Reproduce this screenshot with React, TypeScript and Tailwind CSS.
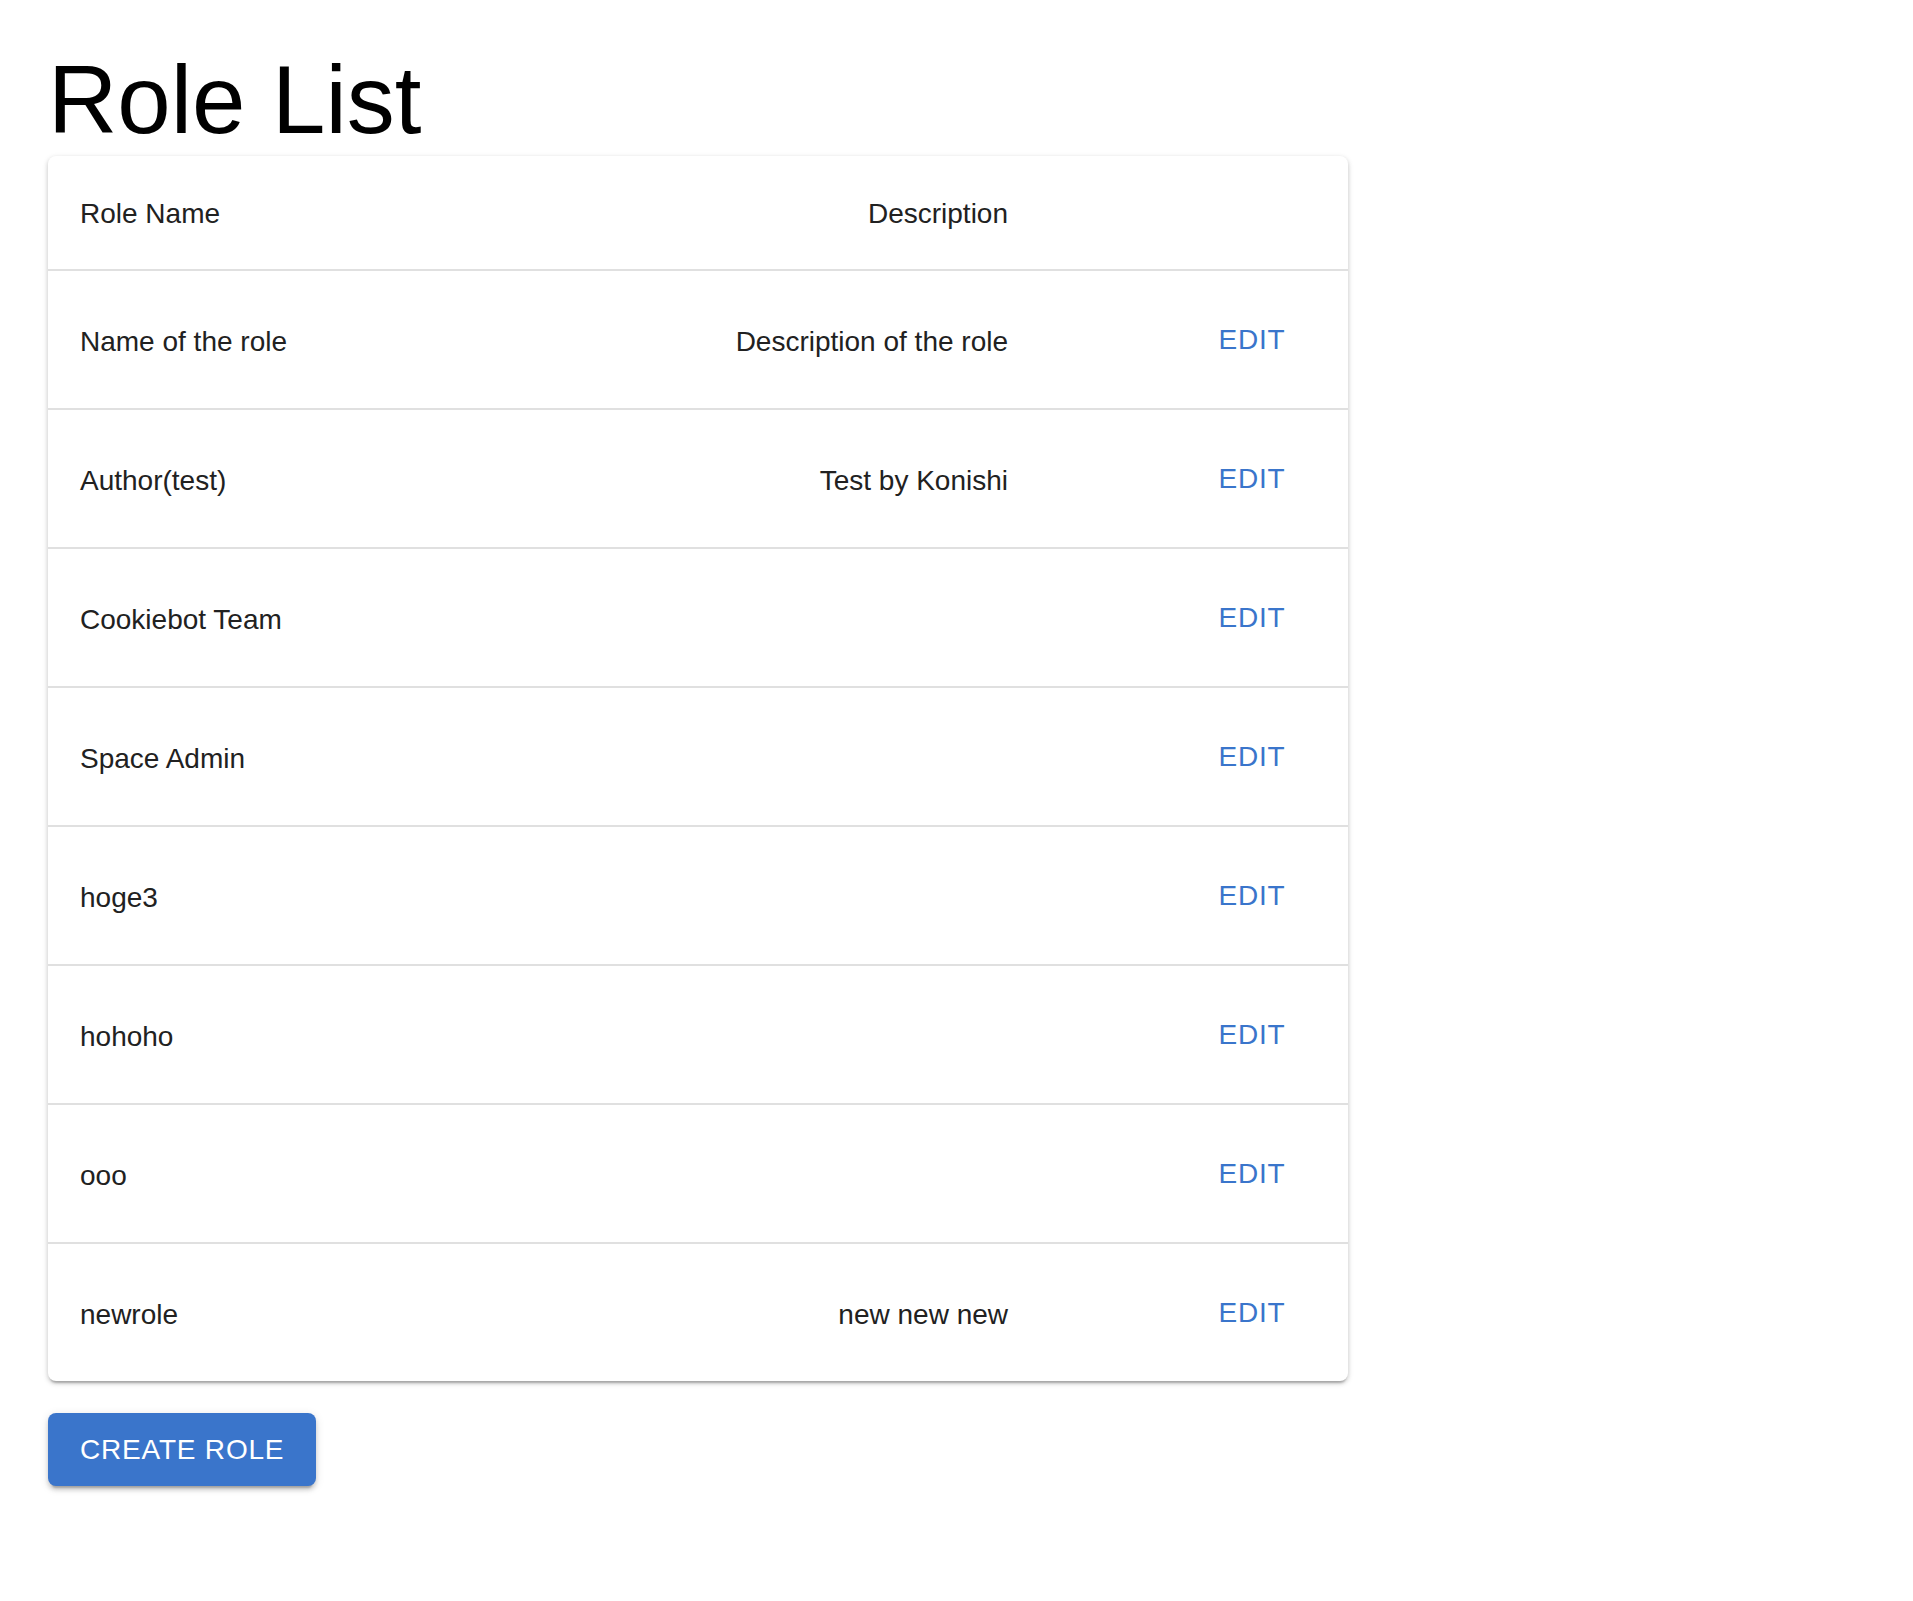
const roles = [
  { name: "Name of the role", description: "Description of the role" },
  { name: "Author(test)", description: "Test by Konishi" },
  { name: "Cookiebot Team", description: "" },
  { name: "Space Admin", description: "" },
  { name: "hoge3", description: "" },
  { name: "hohoho", description: "" },
  { name: "ooo", description: "" },
  { name: "newrole", description: "new new new" },
];

export default function App() {
  return (
    <div className="min-h-screen bg-white px-12 pt-[44px] font-['Liberation_Sans',Arial,sans-serif] text-[#212121]">
      <h1 className="text-[96px] leading-[112px] font-normal text-black">Role List</h1>

      <div className="w-[1300px] rounded-lg bg-white shadow-[0px_4px_2px_-2px_rgba(0,0,0,0.2),0px_2px_4px_0px_rgba(0,0,0,0.14),0px_2px_6px_0px_rgba(0,0,0,0.12)]">
        <div className="grid grid-cols-[496px_496px_308px] border-b-2 border-[#e0e0e0] text-[28px] leading-[48px]">
          <div className="px-8 pt-[34px] pb-[31px]">Role Name</div>
          <div className="px-8 pt-[34px] pb-[31px] text-right">Description</div>
          <div />
        </div>

        {roles.map((role, i) => (
          <div
            key={role.name}
            className={`grid grid-cols-[496px_496px_308px] items-center text-[28px] leading-[40px] ${
              i < roles.length - 1 ? "border-b-2 border-[#e0e0e0]" : ""
            }`}
          >
            <div className="px-8 pt-[34px] pb-[30px]">{role.name}</div>
            <div className="px-8 pt-[34px] pb-[30px] text-right">{role.description}</div>
            <div className="flex justify-end p-8">
              <button className="h-[73px] min-w-[128px] rounded-lg px-4 text-[28px] leading-[49px] uppercase tracking-[0.8px] text-[#3a75cb]">
                Edit
              </button>
            </div>
          </div>
        ))}
      </div>

      <button className="mt-8 h-[73px] rounded-lg bg-[#3a75cb] px-8 text-[28px] leading-[49px] uppercase tracking-[0.8px] text-white shadow-[0px_6px_2px_-4px_rgba(0,0,0,0.2),0px_4px_4px_0px_rgba(0,0,0,0.14),0px_2px_10px_0px_rgba(0,0,0,0.12)]">
        Create Role
      </button>
    </div>
  );
}
